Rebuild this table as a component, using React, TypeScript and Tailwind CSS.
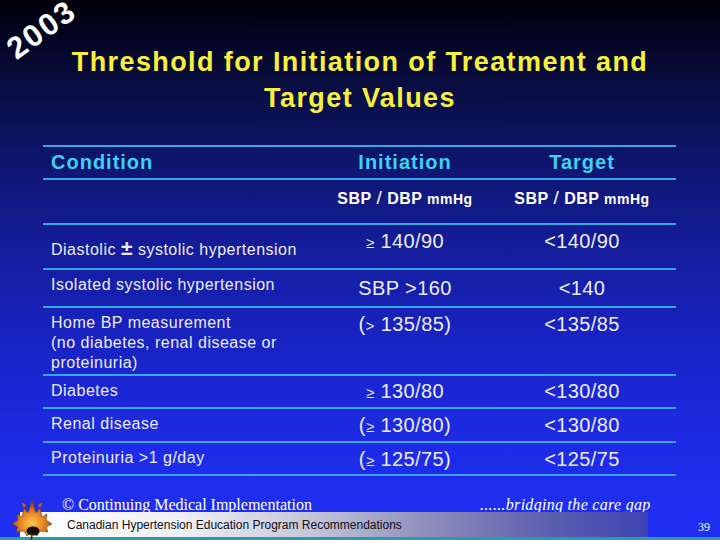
import React from 'react'

const rows = [
  { cond: ['Diastolic ', <span key="pm" className="text-[21px] font-bold leading-none">±</span>, ' systolic hypertension'], init: <><span className="text-[15px]">≥</span> 140/90</>, target: '<140/90', h: 'h-[45px]', lp: 'pt-[12px]', rp: 'pt-[5px]' },
  { cond: ['Isolated systolic hypertension'], init: 'SBP >160', target: '<140', h: 'h-[38px]', lp: 'pt-[5px]', rp: 'pt-[7px]' },
  { cond: ['Home BP measurement', <br key="b1" />, '(no diabetes, renal disease or', <br key="b2" />, 'proteinuria)'], init: <>(<span className="text-[15px]">&gt;</span> 135/85)</>, target: '<135/85', h: 'h-[68px]', lp: 'pt-[5px]', rp: 'pt-[5px]' },
  { cond: ['Diabetes'], init: <><span className="text-[15px]">≥</span> 130/80</>, target: '<130/80', h: 'h-[33px]', lp: 'pt-[5px]', rp: 'pt-[4px]' },
  { cond: ['Renal disease'], init: <>(<span className="text-[15px]">≥</span> 130/80)</>, target: '<130/80', h: 'h-[34px]', lp: 'pt-[5px]', rp: 'pt-[5px]' },
  { cond: ['Proteinuria >1 g/day'], init: <>(<span className="text-[15px]">≥</span> 125/75)</>, target: '<125/75', h: 'h-[33px]', lp: 'pt-[5px]', rp: 'pt-[5px]' },
]

function MapleLogo() {
  return (
    <svg width="44" height="46" viewBox="0 0 44 46" className="absolute left-[10px] top-[-2px]">
      <defs>
        <radialGradient id="lf" cx="50%" cy="65%" r="60%">
          <stop offset="0%" stopColor="#f8c850" />
          <stop offset="55%" stopColor="#e57f1e" />
          <stop offset="100%" stopColor="#8a3a10" />
        </radialGradient>
      </defs>
      <path d="M2 28 L8 24 L7 18 L12 21 L14 12 L18 17 L22 4 L26 17 L30 12 L32 21 L37 18 L36 24 L42 28 L36 31 L38 36 L30 35 L27 40 L22 36 L17 40 L14 35 L6 36 L8 31 Z" fill="url(#lf)" stroke="#7a3a10" strokeWidth="0.6" />
      <path d="M14 12 L11 6 L16 9 Z M30 12 L33 6 L28 9 Z" fill="#c86418" />
      <ellipse cx="23" cy="35" rx="6.5" ry="4.5" fill="#140c06" />
      <path d="M22 38 L21 46" stroke="#5a2a08" strokeWidth="1.6" />
    </svg>
  )
}

export default function App() {
  return (
    <div className="relative w-[720px] h-[540px] overflow-hidden flex flex-col bg-[linear-gradient(to_bottom,#00000a_0%,#0a0e48_18%,#121a86_38%,#1822bd_60%,#1d2be6_82%,#2030f4_100%)] font-['Liberation_Sans',Arial,sans-serif]">
      <div className="absolute left-[3px] top-[14px] -rotate-[36deg] text-white font-bold text-[31px] leading-none tracking-[2px]">
        2003
      </div>

      <h1 className="pt-[44px] text-center text-[27px] leading-[36px] font-bold tracking-[1.4px] text-[#f6f03e]">
        Threshold for Initiation of Treatment and
        <br />
        Target Values
      </h1>

      <div className="mt-[29px] ml-[43px] w-[633px] border-t-2 border-[#36a8e6]">
        <div className="grid grid-cols-[279px_166px_188px] h-[33px] border-b-2 border-[#36a8e6] text-[20px] leading-[24px] font-bold tracking-[1px] text-[#3cd2f4]">
          <div className="pl-2 pt-[3px]">Condition</div>
          <div className="text-center pt-[3px]">Initiation</div>
          <div className="text-center pt-[3px]">Target</div>
        </div>
        <div className="grid grid-cols-[279px_166px_188px] h-[45px] border-b-2 border-[#36a8e6] text-[16px] leading-[20px] font-bold tracking-[0.5px] text-white">
          <div />
          <div className="text-center pt-[8px]">SBP <span className="font-normal text-[19px]">/</span> DBP <span className="text-[14px]">mmHg</span></div>
          <div className="text-center pt-[8px]">SBP <span className="font-normal text-[19px]">/</span> DBP <span className="text-[14px]">mmHg</span></div>
        </div>
        {rows.map((r, i) => (
          <div key={i} className={`grid grid-cols-[279px_166px_188px] border-b-2 border-[#36a8e6] text-[#ececf4] ${r.h}`}>
            <div className={`pl-2 text-[16px] leading-[20px] tracking-[0.5px] ${r.lp}`}>{r.cond}</div>
            <div className={`text-center text-[20px] leading-[22px] tracking-[0.4px] ${r.rp}`}>{r.init}</div>
            <div className={`text-center text-[20px] leading-[22px] tracking-[0.4px] ${r.rp}`}>{r.target}</div>
          </div>
        ))}
      </div>

      <footer className="relative mt-auto">
        <MapleLogo />
        <div className="flex h-[14px] items-center font-['Liberation_Serif',serif] text-[16px] text-white">
          <span className="pl-[62px] w-[480px]">© Continuing Medical Implementation</span>
          <span className="italic tracking-[0.3px]">......bridging the care gap</span>
        </div>
        <div className="flex h-[25px] items-center">
          <div className="ml-[20px] w-[628px] h-full flex items-center pl-[47px] bg-[linear-gradient(to_right,#ffffff_0%,#f0f0f4_25%,#c8c8dc_45%,#8e8ebc_65%,#5a5cae_85%,#3e44b4_100%)] text-[12px] text-[#101018]">
            Canadian Hypertension Education Program Recommendations
          </div>
          <div className="ml-[50px] pt-[4px] font-['Liberation_Serif',serif] text-[12px] text-white">39</div>
        </div>
        <div className="h-[3px] bg-[#2d9aa4]" />
      </footer>
    </div>
  )
}
